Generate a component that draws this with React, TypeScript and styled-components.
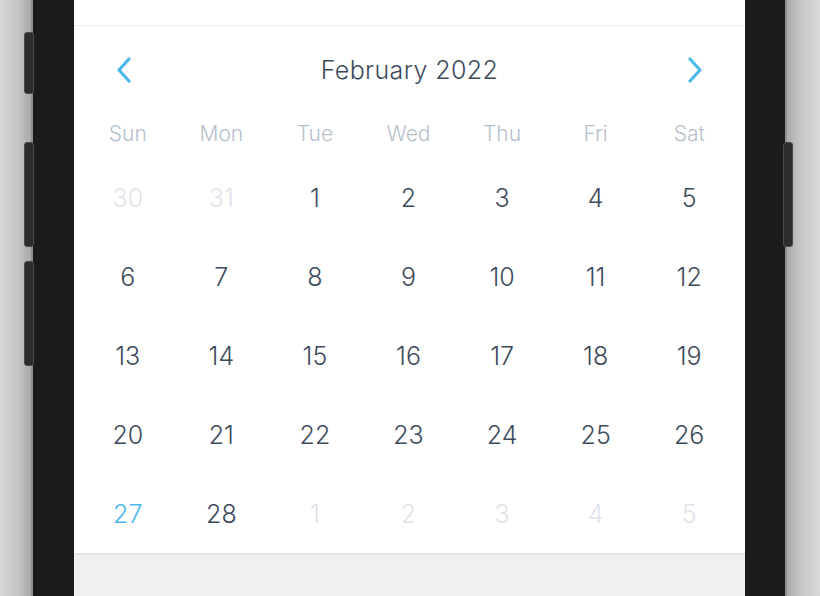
import React from "react";
import styled, { createGlobalStyle } from "styled-components";

const Global = createGlobalStyle`
  html, body { margin: 0; padding: 0; }
  body { font-family: Inter, "Noto Sans", sans-serif; overflow: hidden; }
`;

const Page = styled.div`
  display: flex;
  width: 820px;
  height: 596px;
  overflow: hidden;
`;

const Backdrop = styled.div<{ $side: "left" | "right" }>`
  width: ${(p) => (p.$side === "left" ? 31 : 33)}px;
  flex: none;
  background: ${(p) =>
    p.$side === "left"
      ? "linear-gradient(to right, #d8d8d8 0%, #c4c4c4 60%, #a8a8a8 100%)"
      : "linear-gradient(to left, #dadada 0%, #c6c6c6 60%, #a9a9a9 100%)"};
`;

const Phone = styled.div`
  position: relative;
  flex: none;
  width: 756px;
  display: flex;
  padding: 0 40px 0 41px;
  box-sizing: border-box;
  background: #1b1b1b;
  border-left: 2px solid #8f8f8f;
  border-right: 2px solid #8f8f8f;
`;

const SideButton = styled.div<{ $side: "left" | "right"; $top: number; $h: number }>`
  position: absolute;
  top: ${(p) => p.$top}px;
  ${(p) => (p.$side === "left" ? "left: -9px;" : "right: -8px;")}
  width: 10px;
  height: ${(p) => p.$h}px;
  background: #2c2c2c;
  border: 1px solid #4a4a4a;
  border-radius: 3px;
  box-sizing: border-box;
`;

const Screen = styled.div`
  flex: 1;
  display: flex;
  flex-direction: column;
  background: #f0f0f0;
`;

const TopBar = styled.div`
  height: 25px;
  background: #ffffff;
  border-bottom: 1px solid #eeeeee;
`;

const Card = styled.div`
  background: #ffffff;
  padding: 0 9px 0 7px;
  border-bottom: 2px solid #e4e4e4;
`;

const Header = styled.div`
  height: 88px;
  display: flex;
  align-items: center;
  justify-content: space-between;
  padding: 0 31px 0 33px;
`;

const Title = styled.div`
  font-size: 25px;
  font-weight: 350;
  color: #3e4b5c;
  letter-spacing: 0.4px;
`;

const Arrow = styled.button`
  border: 0;
  background: none;
  padding: 0;
  width: 20px;
  height: 28px;
  display: flex;
  align-items: center;
  justify-content: center;
  cursor: pointer;
`;

const Weekdays = styled.div`
  display: grid;
  grid-template-columns: repeat(7, 1fr);
  height: 38px;
  margin-bottom: 6px;
`;

const Weekday = styled.div`
  display: flex;
  align-items: center;
  justify-content: center;
  font-size: 21px;
  font-weight: 350;
  color: #b6c0cc;
`;

const Days = styled.div`
  display: grid;
  grid-template-columns: repeat(7, 1fr);
  grid-auto-rows: 79px;
`;

const Day = styled.div<{ $kind: "normal" | "muted" | "today" }>`
  display: flex;
  align-items: center;
  justify-content: center;
  font-size: 25px;
  font-weight: 350;
  color: ${(p) =>
    p.$kind === "muted" ? "#dfe4ea" : p.$kind === "today" ? "#4db8ea" : "#3e4b5c"};
`;

const Chevron = ({ dir }: { dir: "left" | "right" }) => (
  <svg width="16" height="26" viewBox="0 0 16 26" fill="none">
    <path
      d={dir === "left" ? "M13 2 L3 13 L13 24" : "M3 2 L13 13 L3 24"}
      stroke="#4db8ea"
      strokeWidth="3.2"
      strokeLinecap="round"
      strokeLinejoin="round"
    />
  </svg>
);

const weekdays = ["Sun", "Mon", "Tue", "Wed", "Thu", "Fri", "Sat"];

type Cell = { n: number; kind: "normal" | "muted" | "today" };

const cells: Cell[] = [
  { n: 30, kind: "muted" },
  { n: 31, kind: "muted" },
  ...Array.from({ length: 28 }, (_, i) => ({
    n: i + 1,
    kind: (i + 1 === 27 ? "today" : "normal") as Cell["kind"],
  })),
  ...[1, 2, 3, 4, 5].map((n) => ({ n, kind: "muted" as const })),
];

export default function App() {
  return (
    <Page>
      <Global />
      <Backdrop $side="left" />
      <Phone>
        <SideButton $side="left" $top={32} $h={62} />
        <SideButton $side="left" $top={142} $h={105} />
        <SideButton $side="left" $top={261} $h={105} />
        <SideButton $side="right" $top={142} $h={105} />
        <Screen>
          <TopBar />
          <Card>
            <Header>
              <Arrow aria-label="Previous month">
                <Chevron dir="left" />
              </Arrow>
              <Title>February 2022</Title>
              <Arrow aria-label="Next month">
                <Chevron dir="right" />
              </Arrow>
            </Header>
            <Weekdays>
              {weekdays.map((w) => (
                <Weekday key={w}>{w}</Weekday>
              ))}
            </Weekdays>
            <Days>
              {cells.map((c, i) => (
                <Day key={i} $kind={c.kind}>
                  {c.n}
                </Day>
              ))}
            </Days>
          </Card>
        </Screen>
      </Phone>
      <Backdrop $side="right" />
    </Page>
  );
}
